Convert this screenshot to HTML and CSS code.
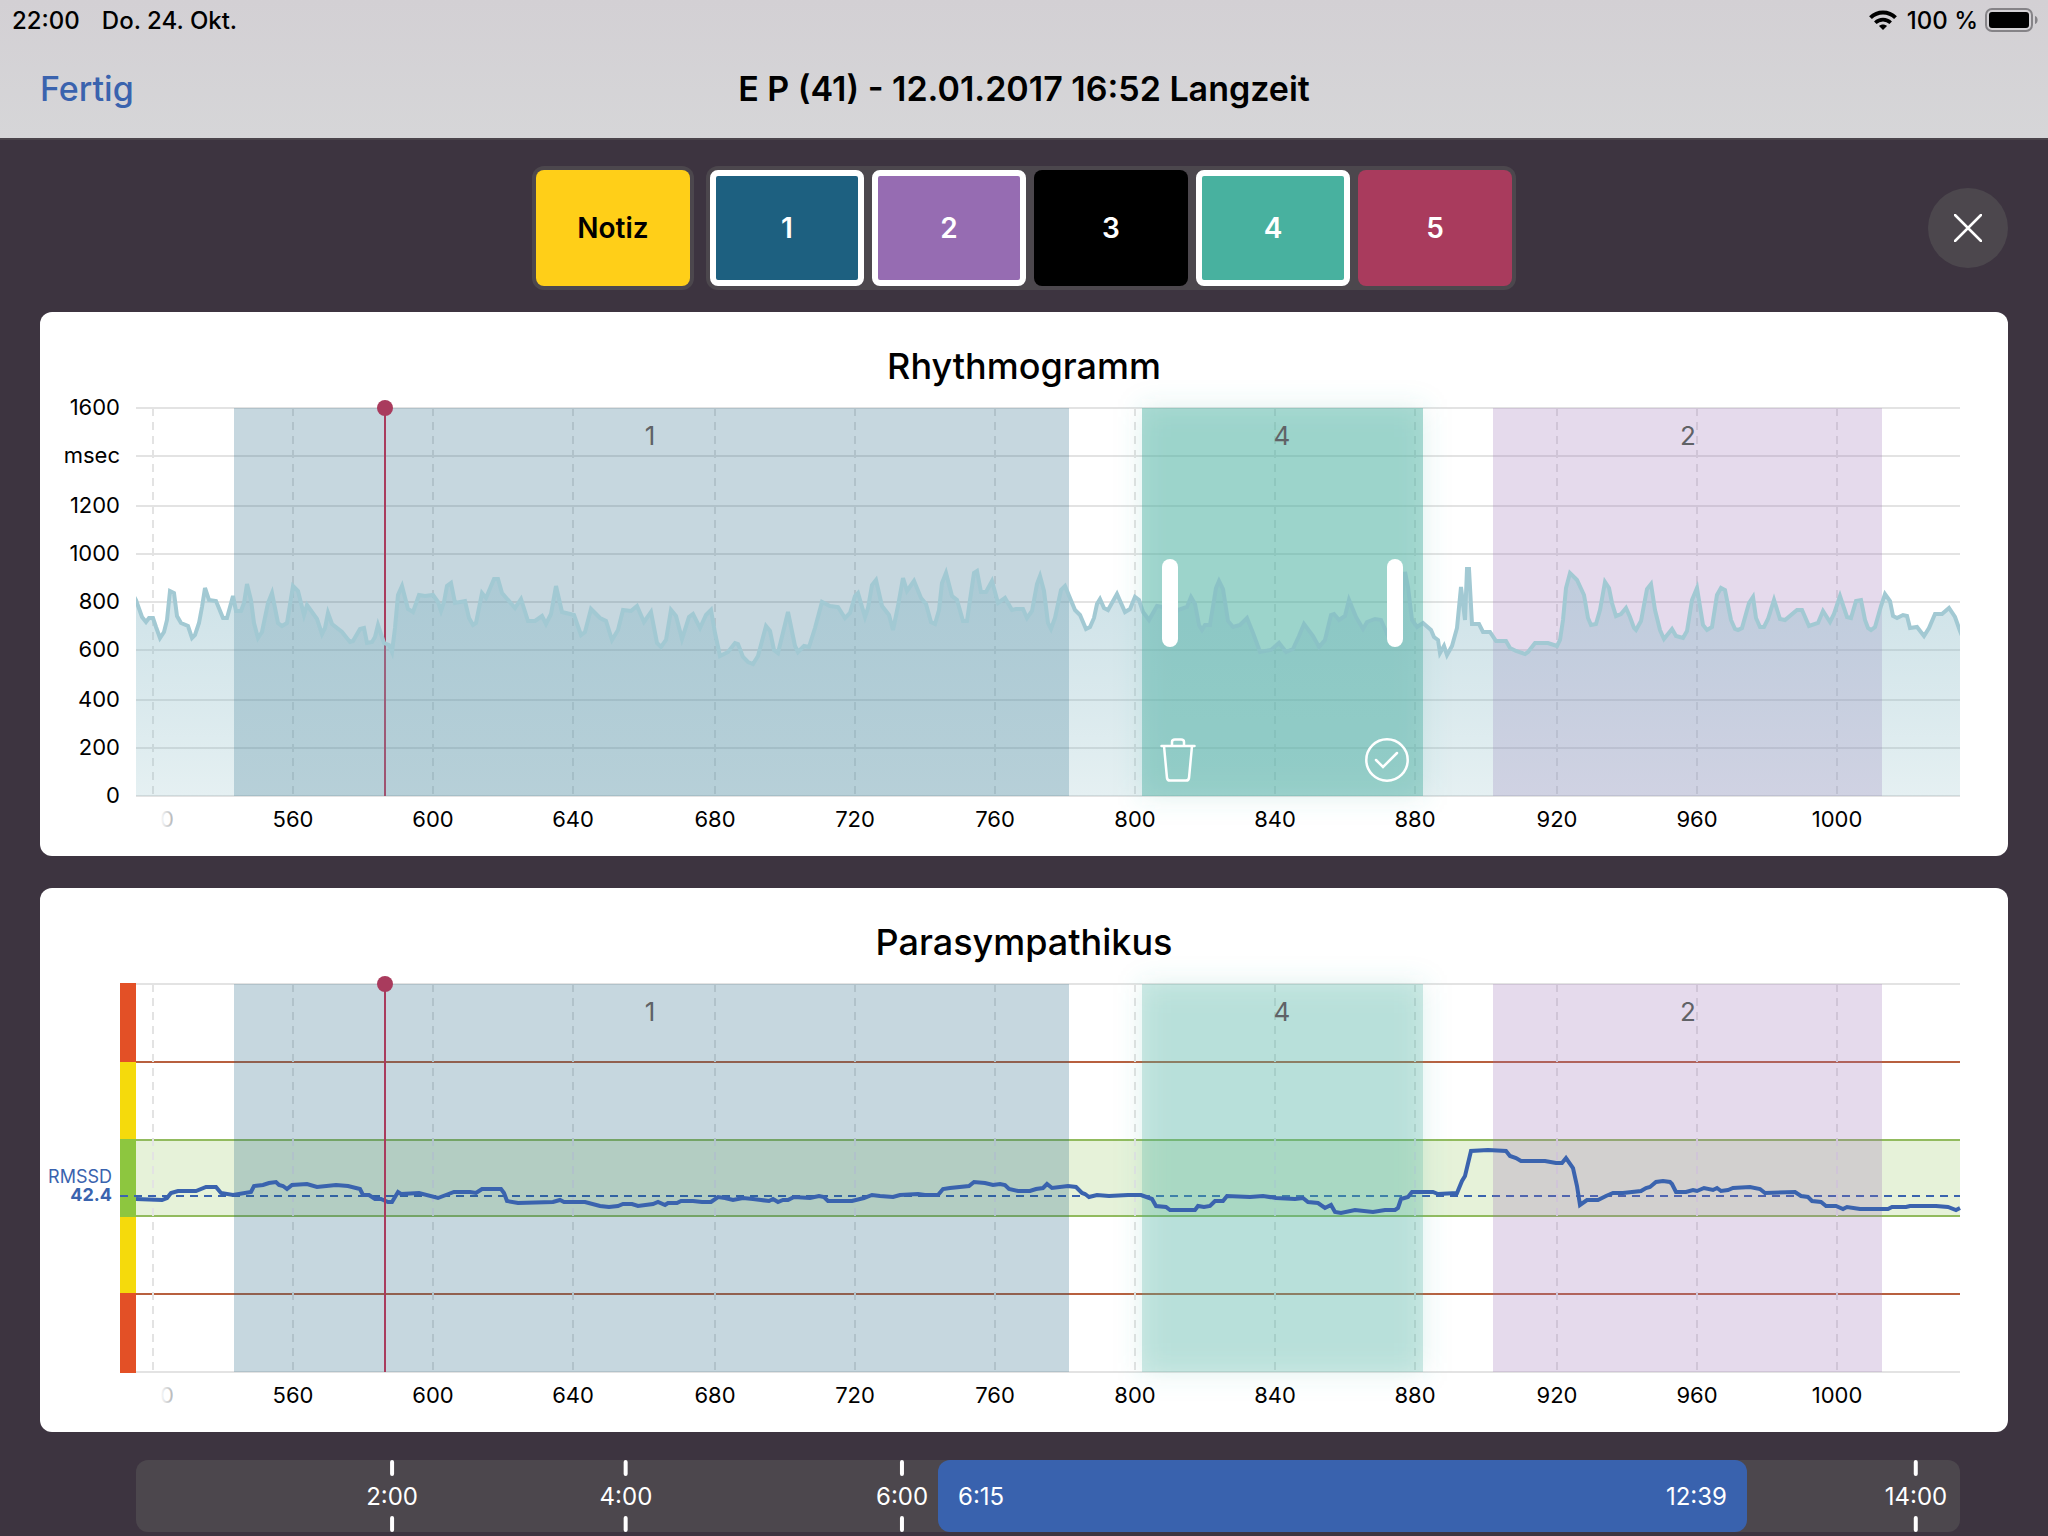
FILE: index.html
```html
<!DOCTYPE html>
<html lang="de">
<head>
<meta charset="utf-8">
<meta name="viewport" content="width=device-width, initial-scale=1">
<title>E P (41) - 12.01.2017 16:52 Langzeit</title>
<link rel="stylesheet" href="styles.css">
</head>
<body>
<header class="header">
  <div class="status">
    <span>22:00</span>
    <span>Do. 24. Okt.</span>
    <span class="status-right">
      <svg class="wifi" viewBox="0 0 28 20" aria-hidden="true">
        <path d="M1.500 7.600C8.500 .7 19.500 .7 26.500 7.600" fill="none" stroke="#000" stroke-width="4"/>
        <path d="M6.300 12.800C10.700 8.600 17.300 8.600 21.700 12.800" fill="none" stroke="#000" stroke-width="3.600"/>
        <path d="M10 16C12.300 14 15.700 14 18 16L14 20Z"/>
      </svg>
      <span>100 %</span>
      <svg class="battery" viewBox="0 0 54 24" aria-hidden="true">
        <rect x="1" y="1" width="46" height="22" rx="6" fill="none" stroke="#858387" stroke-width="2"/>
        <rect x="4" y="4" width="40" height="16" rx="3"/>
        <path d="M50 8C53.500 9 53.500 15 50 16Z" fill="#858387"/>
      </svg>
    </span>
  </div>
  <nav class="navbar">
    <button class="done" type="button">Fertig</button>
    <h1 class="page-title">E P (41) - 12.01.2017 16:52 Langzeit</h1>
  </nav>
</header>

<main class="main">
  <div class="toolbar">
    <div class="markers">
      <div class="group"><button type="button" class="marker note">Notiz</button></div>
      <div class="group">
        <button type="button" class="marker blue used">1</button>
        <button type="button" class="marker purple used">2</button>
        <button type="button" class="marker black">3</button>
        <button type="button" class="marker green used">4</button>
        <button type="button" class="marker red">5</button>
      </div>
    </div>
    <button type="button" class="close" aria-label="Schließen">
      <svg viewBox="0 0 28 28" aria-hidden="true"><path d="M1 1L27 27M27 1L1 27" fill="none" stroke="#fff" stroke-width="2.500" stroke-linecap="round"/></svg>
    </button>
  </div>

  <section class="card">
    <h2 class="card-title">Rhythmogramm</h2>
    <div class="chart">
      <svg class="plot" viewBox="40 380 1968 476" role="img" aria-label="Rhythmogramm">
        <defs>
          <linearGradient id="area" gradientUnits="userSpaceOnUse" x1="0" y1="570" x2="0" y2="796">
            <stop offset="0" stop-color="#89b9c8" stop-opacity=".42"/>
            <stop offset="1" stop-color="#76b0bb" stop-opacity=".19"/>
          </linearGradient>
          <linearGradient id="fade" gradientUnits="userSpaceOnUse" x1="160" y1="0" x2="173" y2="0">
            <stop offset="0" stop-color="#fff"/>
            <stop offset="1" stop-color="#b4b4b4"/>
          </linearGradient>
          <filter id="glow" x="-30%" y="-30%" width="160%" height="160%"><feGaussianBlur stdDeviation="14"/></filter>
          <path id="verticals" d="M153 408V796M293 408V796M433 408V796M573 408V796M715 408V796M855 408V796M995 408V796M1135 408V796M1275 408V796M1415 408V796M1557 408V796M1697 408V796M1837 408V796"/>
          <g id="x-labels">
            <text x="293" y="827">560</text><text x="433" y="827">600</text><text x="573" y="827">640</text>
            <text x="715" y="827">680</text><text x="855" y="827">720</text><text x="995" y="827">760</text>
            <text x="1135" y="827">800</text><text x="1275" y="827">840</text><text x="1415" y="827">880</text>
            <text x="1557" y="827">920</text><text x="1697" y="827">960</text><text x="1837" y="827">1000</text>
          </g>
        </defs>
        <path class="grid" d="M136 408H1960M136 456H1960M136 506H1960M136 554H1960M136 602H1960M136 650H1960M136 700H1960M136 748H1960M136 796H1960"/>
        <use href="#verticals" class="grid dashed"/>
        <rect class="band-blue" x="234" y="408" width="835" height="388"/>
        <rect class="band-purple" x="1493" y="408" width="389" height="388"/>
        <rect class="selected-glow" x="1142" y="408" width="281" height="388" filter="url(#glow)"/>
        <rect class="selected" x="1142" y="408" width="281" height="388"/>
        <path class="cursor" d="M385 408V796"/>
        <clipPath id="plot-clip"><rect x="136" y="408" width="1824" height="388"/></clipPath>
        <g clip-path="url(#plot-clip)">
          <path class="rr" fill="url(#area)" d="M130 810L130 590L136 600L142 617L146 622L149 618L153 618L156 627L160 638L164 632L167 620L170 591L174 593L177 616L181 623L188 626L192 638L195 635L199 623L202 607L205 588L209 600L216 601L223 618L227 618L233 596L236 611L241 611L244 603L247 584L251 600L254 623L258 638L262 632L268 603L272 593L278 623L282 626L287 623L293 586L298 591L304 615L307 605L317 619L322 634L325 628L328 613L332 624L342 632L350 642L353 641L360 629L364 628L367 643L372 642L375 637L378 625L384 643L389 645L392 652L395 628L398 595L402 586L408 609L413 612L419 595L425 596L433 595L438 602L441 611L444 602L447 586L451 583L455 603L465 601L469 618L473 625L476 623L482 593L486 598L494 579L498 579L502 593L515 608L521 599L528 621L535 621L542 616L546 624L551 614L556 586L562 612L574 615L581 635L585 632L591 609L600 618L606 621L612 640L618 630L623 610L631 611L637 606L644 622L651 612L657 643L661 647L666 640L671 610L676 616L682 639L689 617L693 614L700 628L706 615L711 610L715 633L720 656L728 652L735 643L738 644L743 657L748 662L753 664L758 656L766 626L770 631L774 650L778 653L788 612L795 646L798 652L804 646L809 647L815 628L822 602L830 606L838 607L845 618L850 613L855 596L858 593L865 617L868 608L872 585L876 580L882 606L889 615L893 630L898 606L903 578L907 591L914 581L921 598L926 604L931 622L935 624L939 610L942 583L946 573L952 596L957 600L963 621L967 621L970 600L974 573L977 571L981 592L986 592L992 581L998 603L1005 598L1012 610L1016 609L1023 609L1027 618L1032 611L1037 584L1040 576L1044 591L1048 623L1051 629L1055 618L1061 590L1065 586L1075 610L1080 615L1086 629L1090 627L1094 618L1097 604L1100 599L1104 608L1108 610L1117 594L1125 612L1130 609L1135 597L1139 600L1143 612L1149 620L1157 606L1163 607L1171 620L1178 610L1187 607L1191 597L1195 604L1199 625L1202 630L1205 625L1210 625L1216 588L1219 581L1223 589L1228 621L1233 627L1240 625L1247 618L1253 633L1260 652L1271 650L1279 643L1286 652L1293 649L1299 636L1304 624L1313 636L1319 647L1325 640L1331 615L1334 614L1339 620L1345 616L1349 600L1356 617L1363 629L1367 622L1375 619L1381 620L1388 636L1395 637L1400 613L1405 572L1408 587L1412 620L1417 627L1423 623L1431 630L1434 637L1438 640L1440 653L1444 646L1447 655L1452 646L1457 628L1461 587L1465 620L1467 569L1469 569L1472 624L1479 624L1483 632L1490 632L1496 641L1506 641L1510 648L1516 651L1525 654L1528 652L1535 643L1548 643L1557 646L1560 640L1563 620L1566 588L1570 573L1577 580L1584 595L1588 618L1591 625L1596 624L1600 610L1605 582L1609 588L1612 603L1616 616L1621 614L1626 608L1630 617L1634 628L1636 630L1641 621L1647 589L1651 584L1655 610L1660 630L1664 639L1672 629L1676 636L1683 638L1687 631L1692 600L1697 588L1703 625L1707 630L1712 627L1717 595L1721 588L1725 590L1731 620L1735 629L1738 630L1742 628L1749 603L1753 597L1756 618L1760 627L1764 627L1768 619L1774 600L1780 619L1785 620L1797 610L1802 610L1809 626L1818 623L1823 611L1830 622L1834 614L1840 596L1847 617L1851 618L1856 601L1861 600L1865 620L1868 628L1871 630L1875 627L1881 606L1885 594L1890 601L1893 616L1897 618L1903 615L1907 616L1910 628L1917 627L1924 636L1929 628L1935 614L1942 614L1949 608L1955 617L1960 631L1968 650L1968 810Z"/>
        </g>
        <rect class="selected" x="1142" y="408" width="281" height="388"/>
        <circle class="cursor-dot" cx="385" cy="408" r="8"/>
        <g class="band-label"><text x="650" y="445">1</text><text x="1282" y="445">4</text><text x="1688" y="445">2</text></g>
        <g class="axis y-axis">
          <text x="120" y="415">1600</text><text x="120" y="463">msec</text><text x="120" y="513">1200</text>
          <text x="120" y="561">1000</text><text x="120" y="609">800</text><text x="120" y="657">600</text>
          <text x="120" y="707">400</text><text x="120" y="755">200</text><text x="120" y="803">0</text>
        </g>
        <g class="axis"><use href="#x-labels"/><text x="167" y="827" fill="url(#fade)">0</text></g>
      </svg>
      <div class="selection">
        <div class="handles">
          <button type="button" class="handle" aria-label="Anfang verschieben"></button>
          <button type="button" class="handle" aria-label="Ende verschieben"></button>
        </div>
        <div class="actions">
          <button type="button" class="action" aria-label="Löschen">
            <svg class="trash" viewBox="0 0 36 44" aria-hidden="true"><path d="M1.500 8H34.500M4 8L7 40Q7.300 42.500 10 42.500H26Q28.700 42.500 29 40L32 8M12 8V4Q12 1.500 15 1.500H21Q24 1.500 24 4V8" fill="none" stroke="#fff" stroke-width="2.500" stroke-linecap="round"/></svg>
          </button>
          <button type="button" class="action" aria-label="Bestätigen">
            <svg class="check" viewBox="0 0 44 44" aria-hidden="true"><circle cx="22" cy="22" r="20.700" fill="none" stroke="#fff" stroke-width="2.500"/><path d="M11 22L18 29L32 15" fill="none" stroke="#fff" stroke-width="2.500" stroke-linecap="round"/></svg>
          </button>
        </div>
      </div>
    </div>
  </section>

  <section class="card">
    <h2 class="card-title">Parasympathikus</h2>
    <div class="chart">
      <svg class="plot" viewBox="40 380 1968 476" role="img" aria-label="Parasympathikus">
        <rect x="136" y="564" width="1824" height="76" fill="#e6f2d9"/>
        <path class="grid" d="M136 408H1960M136 796H1960"/>
        <path class="limit-red" d="M136 486H1960M136 718H1960"/>
        <path class="limit-green" d="M136 564H1960M136 640H1960"/>
        <use href="#verticals" class="grid dashed"/>
        <g class="zones">
          <rect x="120" y="407" width="16" height="79" fill="#e35026"/>
          <rect x="120" y="486" width="16" height="77" fill="#f5da0c"/>
          <rect x="120" y="563" width="16" height="78" fill="#8dc63f"/>
          <rect x="120" y="641" width="16" height="76" fill="#f5da0c"/>
          <rect x="120" y="717" width="16" height="80" fill="#e35026"/>
        </g>
        <path class="mean" d="M120 620H1960"/>
        <rect class="band-blue" x="234" y="408" width="835" height="388"/>
        <rect class="band-purple" x="1493" y="408" width="389" height="388"/>
        <rect class="selected-glow" x="1142" y="408" width="281" height="388" filter="url(#glow)"/>
        <rect class="selected" x="1142" y="408" width="281" height="388"/>
        <path class="rmssd" d="M136 623L162 624L167 622L171 617L178 615L196 615L206 611L216 611L221 617L233 619L251 616L254 610L263 609L269 607L276 606L279 609L283 610L287 613L292 609L307 608L317 611L336 609L348 610L360 613L363 619L369 619L375 623L381 623L388 626L392 626L398 616L401 618L419 617L438 622L454 616L470 616L476 617L482 613L501 613L504 617L507 625L518 627L553 626L560 624L564 626L585 626L600 630L609 631L618 630L623 628L632 628L638 630L653 628L658 626L665 629L668 627L677 627L681 625L693 625L702 626L711 626L718 621L725 622L733 624L743 622L753 623L761 624L769 625L773 623L778 626L783 624L788 624L794 621L810 622L819 620L824 621L828 625L852 625L864 622L872 619L880 620L893 621L900 619L918 618L925 619L938 619L943 613L950 612L969 610L974 606L985 607L993 609L1000 608L1005 609L1009 613L1018 615L1030 615L1036 613L1043 612L1047 608L1052 612L1068 610L1076 611L1082 617L1085 618L1089 621L1097 619L1109 620L1128 619L1141 619L1152 623L1156 630L1166 631L1170 634L1195 634L1198 630L1204 631L1210 630L1215 625L1223 625L1227 620L1250 621L1263 620L1276 622L1295 623L1303 622L1308 626L1318 627L1325 632L1331 629L1335 636L1341 637L1355 634L1373 636L1385 634L1395 634L1398 632L1401 623L1408 621L1412 616L1433 616L1438 618L1457 617L1462 605L1465 600L1471 575L1488 574L1506 575L1510 580L1516 582L1521 585L1545 585L1556 587L1562 587L1566 582L1573 592L1577 610L1580 629L1587 624L1598 624L1606 620L1613 617L1623 617L1641 615L1646 612L1650 611L1656 606L1663 605L1670 606L1672 608L1676 616L1686 616L1693 614L1697 615L1704 612L1713 614L1717 612L1721 615L1728 614L1733 612L1750 611L1760 613L1765 617L1795 616L1801 620L1808 621L1812 625L1821 626L1826 630L1836 630L1843 633L1847 631L1860 633L1888 633L1892 631L1906 631L1910 630L1936 630L1948 631L1956 634L1960 632"/>
        <path class="cursor" d="M385 408V796"/>
        <circle class="cursor-dot" cx="385" cy="408" r="8"/>
        <g class="band-label"><text x="650" y="445">1</text><text x="1282" y="445">4</text><text x="1688" y="445">2</text></g>
        <g class="value-label"><text x="112" y="607">RMSSD</text><text class="value" x="112" y="625">42.4</text></g>
        <g class="axis"><use href="#x-labels"/><text x="167" y="827" fill="url(#fade)">0</text></g>
      </svg>
    </div>
  </section>

  <div class="timeline">
    <span class="tick" style="left:14.04%">2:00</span>
    <span class="tick" style="left:26.86%">4:00</span>
    <span class="tick" style="left:42%">6:00</span>
    <span class="tick" style="left:97.59%">14:00</span>
    <div class="range" style="left:43.97%;width:44.35%"><span>6:15</span><span>12:39</span></div>
  </div>
</main>
</body>
</html>
```
FILE: styles.css
```css
* { box-sizing: border-box; }

body {
  margin: 0;
  min-height: 100vh;
  background: #3d3440;
  color: #000;
  font-family: Inter, "Liberation Sans", sans-serif;
}

button {
  margin: 0;
  padding: 0;
  border: 0;
  background: none;
  color: inherit;
  font: inherit;
}

svg { display: block; }

/* Header */
.header {
  height: 138px;
  background: linear-gradient(#d3d0d4, #d6d6d8);
}

.status {
  display: flex;
  align-items: center;
  gap: 22px;
  height: 40px;
  padding: 0 9px 0 12px;
  font-size: 24px;
  font-weight: 500;
}

.status-right {
  display: flex;
  align-items: center;
  gap: 7px;
  margin-left: auto;
}

.wifi { width: 28px; height: 20px; margin-right: 3px; }
.battery { width: 54px; height: 24px; }

.navbar {
  display: grid;
  grid-template-columns: 1fr auto 1fr;
  align-items: center;
  height: 98px;
  padding: 0 40px;
}

.done,
.page-title {
  margin: 0;
  padding-bottom: 1px;
  font-size: 34px;
  line-height: 40px;
}

.done {
  justify-self: start;
  color: #3a63ae;
  font-weight: 500;
}

.page-title { font-weight: 600; }

/* Marker toolbar */
.main {
  padding: 0 40px 4px;
  border-top: 2px solid #4a444b;
}

.toolbar {
  display: grid;
  grid-template-columns: 1fr auto 1fr;
  align-items: center;
  padding: 26px 0 22px;
}

.markers {
  display: flex;
  grid-column: 2;
  gap: 12px;
}

.group {
  display: flex;
  gap: 8px;
  padding: 4px;
  border-radius: 12px;
  background: #4c474d;
}

.marker {
  width: 154px;
  height: 116px;
  border-radius: 8px;
  color: #fff;
  font-size: 28px;
  font-weight: 600;
}

.marker.used { border: 6px solid #fff; }
.note { background: #ffcf18; color: #000; }
.blue { background: #1d6080; }
.purple { background: #966cb2; }
.black { background: #000; }
.green { background: #48b19f; }
.red { background: #a93b5d; }

.close {
  display: grid;
  place-items: center;
  justify-self: end;
  width: 80px;
  height: 80px;
  border-radius: 50%;
  background: #4c474d;
}

.close svg { width: 28px; height: 28px; }

/* Chart cards */
.card {
  margin-bottom: 32px;
  border-radius: 12px;
  background: #fff;
}

.card-title {
  margin: 0;
  padding: 34px 0 0;
  font-size: 36px;
  line-height: 40px;
  height: 68px;
  font-weight: 500;
  text-align: center;
}

.chart { position: relative; }
.plot { width: 100%; height: auto; }

.grid { fill: none; stroke: #e3e3e3; stroke-width: 2; }
.dashed { stroke-dasharray: 8 6; }
.band-blue { fill: #1d6080; fill-opacity: .25; }
.band-purple { fill: #966cb2; fill-opacity: .25; }
.selected { fill: #47b19e; fill-opacity: .25; }
.selected-glow { fill: #47b19e; fill-opacity: .18; }
.cursor { stroke: #a93b5d; stroke-width: 2; }
.cursor-dot { fill: #a93b5d; }
.rr { stroke: #a2c9d3; stroke-width: 4; }
.rmssd { fill: none; stroke: #3a63ae; stroke-width: 4; }
.limit-red { stroke: #b8603f; stroke-width: 2; }
.limit-green { stroke: #92bb5e; stroke-width: 2; }
.mean { stroke: #3a63ae; stroke-width: 2; stroke-dasharray: 8 6; }

.axis { font-size: 22px; text-anchor: middle; }
.y-axis { text-anchor: end; }
.band-label { fill: #606266; font-size: 26px; text-anchor: middle; }
.value-label { fill: #3a63ae; font-size: 18px; text-anchor: end; }
.value { font-weight: 700; }

/* Selected range overlay on the chart */
.selection {
  position: absolute;
  left: 56%;
  top: 6%;
  width: 14.28%;
  height: 81.5%;
}

.handles {
  position: absolute;
  inset: 0;
  display: flex;
  align-items: center;
  justify-content: space-between;
  padding: 0 20px;
}

.handle {
  width: 16px;
  height: 88px;
  border-radius: 8px;
  background: #fff;
}

.actions {
  position: absolute;
  inset: auto 14px 14px 18px;
  display: flex;
  justify-content: space-between;
}

.trash { width: 36px; height: 44px; }
.check { width: 44px; height: 44px; }

/* Timeline */
.timeline {
  position: relative;
  height: 72px;
  margin: -4px 48px 0 96px;
  border-radius: 12px;
  background: #4c474d;
  color: #fff;
  font-size: 24px;
}

.tick {
  position: absolute;
  display: flex;
  flex-direction: column;
  align-items: center;
  justify-content: space-between;
  height: 100%;
  transform: translateX(-50%);
}

.tick::before,
.tick::after {
  content: "";
  width: 4px;
  height: 16px;
  border-radius: 2px;
  background: #fff;
}

.range {
  position: absolute;
  display: flex;
  align-items: center;
  justify-content: space-between;
  height: 100%;
  padding: 0 20px;
  border-radius: 12px;
  background: #3962ae;
}
```
